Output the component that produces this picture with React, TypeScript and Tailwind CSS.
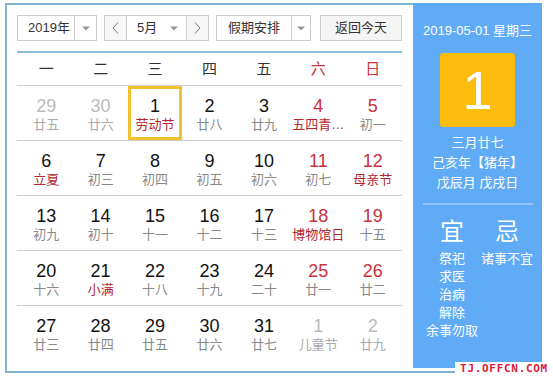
import React from "react";

type Day = { n: number; l: string; numC?: "gray" | "red" | "black"; lunC?: "gray" | "red" | "lg"; sel?: boolean };

const rows: Day[][] = [
  [
    { n: 29, l: "廿五", numC: "gray", lunC: "lg" },
    { n: 30, l: "廿六", numC: "gray", lunC: "lg" },
    { n: 1, l: "劳动节", lunC: "red", sel: true },
    { n: 2, l: "廿八" },
    { n: 3, l: "廿九" },
    { n: 4, l: "五四青…", numC: "red", lunC: "red" },
    { n: 5, l: "初一", numC: "red" },
  ],
  [
    { n: 6, l: "立夏", lunC: "red" },
    { n: 7, l: "初三" },
    { n: 8, l: "初四" },
    { n: 9, l: "初五" },
    { n: 10, l: "初六" },
    { n: 11, l: "初七", numC: "red" },
    { n: 12, l: "母亲节", numC: "red", lunC: "red" },
  ],
  [
    { n: 13, l: "初九" },
    { n: 14, l: "初十" },
    { n: 15, l: "十一" },
    { n: 16, l: "十二" },
    { n: 17, l: "十三" },
    { n: 18, l: "博物馆日", numC: "red", lunC: "red" },
    { n: 19, l: "十五", numC: "red" },
  ],
  [
    { n: 20, l: "十六" },
    { n: 21, l: "小满", lunC: "red" },
    { n: 22, l: "十八" },
    { n: 23, l: "十九" },
    { n: 24, l: "二十" },
    { n: 25, l: "廿一", numC: "red" },
    { n: 26, l: "廿二", numC: "red" },
  ],
  [
    { n: 27, l: "廿三" },
    { n: 28, l: "廿四" },
    { n: 29, l: "廿五" },
    { n: 30, l: "廿六" },
    { n: 31, l: "廿七" },
    { n: 1, l: "儿童节", numC: "gray", lunC: "lg" },
    { n: 2, l: "廿九", numC: "gray", lunC: "lg" },
  ],
];

const font = { fontFamily: '"Liberation Sans", "Noto Sans CJK SC", sans-serif' };

function Caret() {
  return (
    <svg width="8" height="5" viewBox="0 0 8 5">
      <path d="M0 0.5 L8 0.5 L4 4.5 Z" fill="#999" />
    </svg>
  );
}

function Chevron({ dir }: { dir: "l" | "r" }) {
  return (
    <svg width="7" height="12" viewBox="0 0 7 12">
      <polyline
        points={dir === "l" ? "6,0.5 1,6 6,11.5" : "1,0.5 6,6 1,11.5"}
        fill="none"
        stroke="#777"
        strokeWidth="1"
      />
    </svg>
  );
}

export default function App() {
  return (
    <div className="relative w-[553px] h-[379px] bg-white overflow-hidden" style={font}>
      <div className="flex items-start pt-[3px] pl-[5px]">
        {/* Left panel */}
        <div className="w-[408px] h-[370px] border-l-2 border-t-2 border-b-2 border-[#7fb3d5] pt-[10px] pl-[10px] pr-[11px] flex flex-col">
          {/* header */}
          <div className="flex h-[26px] text-[13px] text-[#333]">
            <div className="w-[80px] h-[26px] border border-[#ccc] flex">
              <div className="w-[56px] flex items-center pl-[10px]">2019年</div>
              <div className="flex-1 border-l border-[#ccc] flex items-center justify-center">
                <Caret />
              </div>
            </div>
            <div className="ml-[7px] w-[105px] h-[26px] border border-[#ccc] flex">
              <div className="w-[22px] bg-[#f7f7f7] border-r border-[#ccc] flex items-center justify-center">
                <Chevron dir="l" />
              </div>
              <div className="w-[59px] flex items-center justify-between pl-[10px] pr-[8px]">
                <span>5月</span>
                <Caret />
              </div>
              <div className="flex-1 bg-[#f7f7f7] border-l border-[#ccc] flex items-center justify-center">
                <Chevron dir="r" />
              </div>
            </div>
            <div className="ml-[7px] w-[95px] h-[26px] border border-[#ccc] flex">
              <div className="w-[74px] flex items-center pl-[11px]">假期安排</div>
              <div className="flex-1 border-l border-[#ccc] flex items-center justify-center">
                <Caret />
              </div>
            </div>
            <div className="ml-[9px] w-[82px] h-[26px] border border-[#ccc] bg-[#f5f5f5] flex items-center justify-center">
              返回今天
            </div>
          </div>
          <div className="mt-[10px] h-[2px] bg-[#8bbcd8]" />
          {/* weekdays */}
          <div className="h-[33px] border-b border-[#ccc] grid grid-cols-7 px-[2px] text-[15px] items-center">
            {["一", "二", "三", "四", "五", "六", "日"].map((w, i) => (
              <div key={w} className={"text-center " + (i >= 5 ? "text-[#c8323c]" : "text-[#333]")}>
                {w}
              </div>
            ))}
          </div>
          {rows.map((r, ri) => (
            <div
              key={ri}
              className={"grid grid-cols-7 px-[2px] h-[55px] " + (ri < 4 ? "border-b border-[#ccc]" : "")}
            >
              {r.map((d, di) => (
                <div
                  key={di}
                  className={
                    "flex flex-col items-center h-[54px] " +
                    (d.sel ? "border-[3px] border-[#f2c12e] pt-[7px]" : "pt-[10px]")
                  }
                >
                  <div
                    className={
                      "text-[18px] leading-[20px] " +
                      (d.numC === "gray"
                        ? "text-[#bbb]"
                        : d.numC === "red"
                        ? "text-[#c8323c]"
                        : "text-[#111]")
                    }
                  >
                    {d.n}
                  </div>
                  <div
                    className={
                      "text-[13px] leading-[18px] whitespace-nowrap " +
                      (d.lunC === "red"
                        ? "text-[#b3262f]"
                        : d.lunC === "lg"
                        ? "text-[#aaa]"
                        : "text-[#888]")
                    }
                  >
                    {d.l}
                  </div>
                </div>
              ))}
            </div>
          ))}
        </div>
        {/* Right panel */}
        <div className="flex flex-col w-[129px]">
          <div className="h-[365px] bg-[#5fabf6] flex flex-col items-center pt-[18px] text-white">
            <div className="text-[13px] leading-[20px]">2019-05-01 星期三</div>
            <div className="mt-[12px] w-[75px] h-[74px] rounded-[3px] bg-[#fdbb0d] flex items-center justify-center text-[54px] leading-none">
              1
            </div>
            <div className="mt-[6px] text-[13px] leading-[20px] text-center">
              <div>三月廿七</div>
              <div>己亥年【猪年】</div>
              <div>戊辰月 戊戌日</div>
            </div>
            <div className="mt-[10px] w-[110px] h-[2px] bg-[#8ec5fa]" />
            <div className="mt-[13px] flex w-full pl-[8px]">
              <div className="w-[62px] flex flex-col items-center">
                <div className="text-[24px] leading-[28px]">宜</div>
                <div className="mt-[4px] text-[13px] leading-[18px] flex flex-col items-center whitespace-nowrap">
                  <div>祭祀</div>
                  <div>求医</div>
                  <div>治病</div>
                  <div>解除</div>
                  <div>余事勿取</div>
                </div>
              </div>
              <div className="w-[48px] flex flex-col items-center">
                <div className="text-[24px] leading-[28px]">忌</div>
                <div className="mt-[4px] text-[13px] leading-[18px] whitespace-nowrap">诸事不宜</div>
              </div>
            </div>
          </div>
          <div className="mt-[3px] h-[2px] bg-[#7fb3d5]" />
        </div>
      </div>
      <div
        className="absolute left-[455px] top-[362px] w-[98px] h-[14px] bg-white flex items-center justify-center text-[11px] font-bold text-[#e0203a] tracking-[0.7px]"
        style={{ fontFamily: '"DejaVu Sans Mono", monospace' }}
      >
        TJ.OFFCN.COM
      </div>
    </div>
  );
}
